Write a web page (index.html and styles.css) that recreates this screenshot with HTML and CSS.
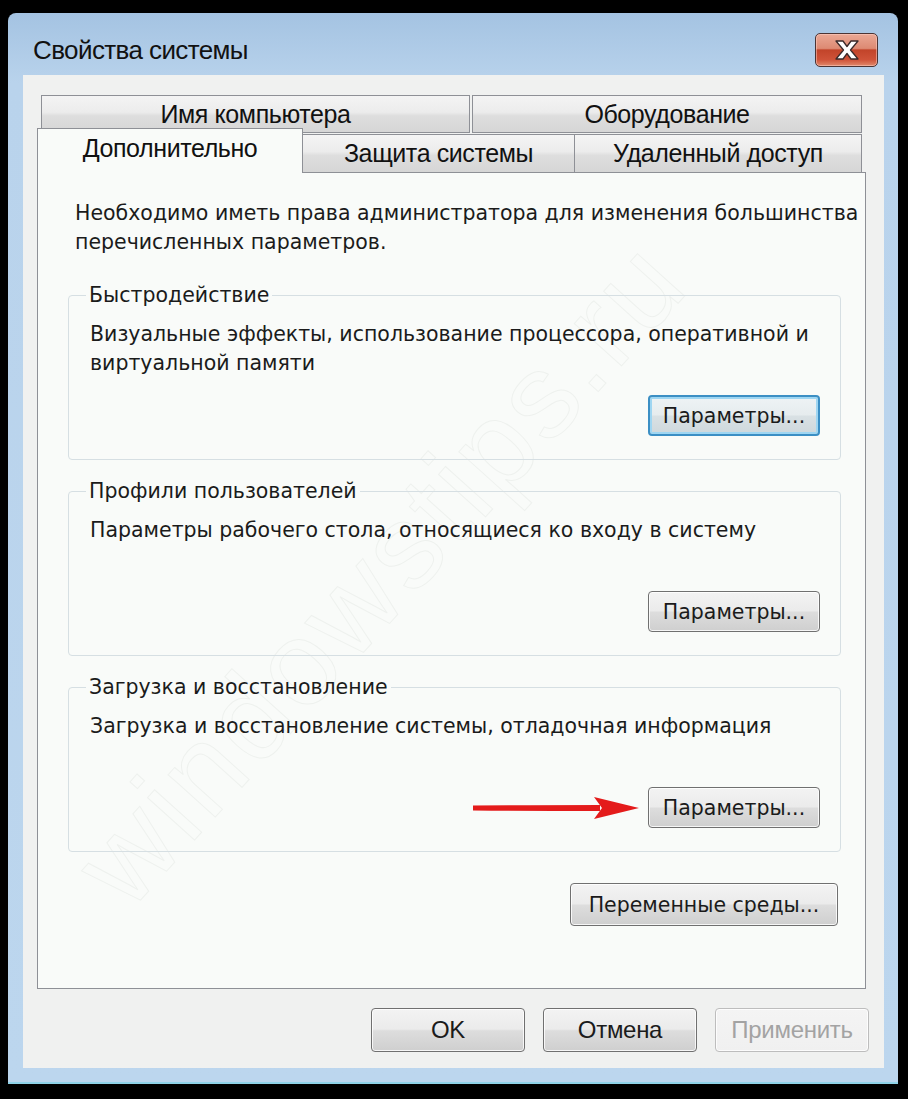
FILE: index.html
```html
<!DOCTYPE html>
<html lang="ru">
<head>
    <meta charset="UTF-8">
    <title>Свойства системы</title>
    <link rel="stylesheet" href="styles.css">
</head>
<body>
    <div class="window">
        <div class="titlebar">
            <div class="title">Свойства системы</div>
            <button class="close-btn" title="Закрыть">
                <svg width="30" height="22" viewBox="0 0 30 22">
                    <path d="M4 2 H11 L15 7.5 L19 2 H26 L18.5 11 L26 20 H19 L15 14.5 L11 20 H4 L11.5 11 Z" fill="#ffffff" stroke="#3a2a2a" stroke-width="1.3" stroke-linejoin="round"/>
                </svg>
            </button>
        </div>

        <div class="dialog">
            <div class="tabs">
                <div class="tab-row back">
                    <div class="tab wide">Имя компьютера</div>
                    <div class="tab">Оборудование</div>
                </div>
                <div class="tab-row front">
                    <div class="tab selected">Дополнительно</div>
                    <div class="tab t-protect">Защита системы</div>
                    <div class="tab t-remote">Удаленный доступ</div>
                </div>
            </div>

            <div class="panel">
                <div class="watermark">windowstips.ru</div>

                <p class="intro">Необходимо иметь права администратора для изменения большинства перечисленных параметров.</p>

                <fieldset class="group">
                    <legend>Быстродействие</legend>
                    <p class="group-text">Визуальные эффекты, использование процессора, оперативной и виртуальной памяти</p>
                    <div class="group-actions">
                        <button class="btn focused">Параметры...</button>
                    </div>
                </fieldset>

                <fieldset class="group">
                    <legend>Профили пользователей</legend>
                    <p class="group-text">Параметры рабочего стола, относящиеся ко входу в систему</p>
                    <div class="group-actions">
                        <button class="btn">Параметры...</button>
                    </div>
                </fieldset>

                <fieldset class="group">
                    <legend>Загрузка и восстановление</legend>
                    <p class="group-text">Загрузка и восстановление системы, отладочная информация</p>
                    <div class="group-actions">
                        <svg class="arrow" width="168" height="26" viewBox="0 0 168 26">
                            <path d="M1 10.5 Q60 10 128 10 L128 16 Q60 16 1 15.5 Z" fill="#e41b1b"/>
                            <path d="M122 2 L167 13 L122 24 L130 13 Z" fill="#e41b1b"/>
                        </svg>
                        <button class="btn">Параметры...</button>
                    </div>
                </fieldset>

                <div class="env-row">
                    <button class="btn env">Переменные среды...</button>
                </div>
            </div>

            <div class="dialog-buttons">
                <button class="btn big">OK</button>
                <button class="btn big">Отмена</button>
                <button class="btn big" disabled>Применить</button>
            </div>
        </div>
    </div>
</body>
</html>
```

FILE: styles.css
```css
* {
    margin: 0;
    padding: 0;
    box-sizing: border-box;
}

body {
    width: 908px;
    height: 1099px;
    background: #000;
    font-family: 'DejaVu Sans', Verdana, sans-serif;
    font-size: 20.5px;
    color: #1b1b1b;
    overflow: hidden;
}

/* рамка окна */
.window {
    margin: 13px 10px 0 8px;
    height: 1071px;
    border-radius: 8px 8px 0 0;
    background: linear-gradient(to bottom, #a4c3e2 0, #b9d3ec 70px, #bcd6ee 100%);
    padding: 0 14px 16px 15px;
    border-bottom: 2px solid #8fd3e8;
}

.titlebar {
    display: flex;
    align-items: center;
    justify-content: space-between;
    padding: 20px 6px 8px 10px;
    height: 62px;
}

.title {
    font-family: 'Liberation Sans', Arial, sans-serif;
    font-size: 26px;
    letter-spacing: -0.6px;
    color: #111;
}

.close-btn {
    width: 63px;
    height: 34px;
    border: 1px solid #4b3434;
    border-radius: 5px;
    background: linear-gradient(to bottom, #eaa895 0, #dd8a73 45%, #c2442a 50%, #cf5238 80%, #e08a6c 100%);
    display: flex;
    align-items: center;
    justify-content: center;
    box-shadow: inset 0 0 0 1px rgba(255, 210, 200, 0.5);
}

/* внутренняя часть диалога */
.dialog {
    background: #f0f1f0;
    height: 993px;
    padding: 20px 18px 16px 14px;
    display: flex;
    flex-direction: column;
}

.tab-row {
    display: flex;
}

.tab-row.back {
    margin: 0 4px;
}

.tab {
    height: 38px;
    flex: 1;
    display: flex;
    align-items: center;
    justify-content: center;
    border: 1px solid #8e9096;
    background: linear-gradient(to bottom, #f4f4f4 0, #ececec 45%, #dedede 55%, #d6d6d6 100%);
    font-family: 'Liberation Sans', Arial, sans-serif;
    font-size: 25px;
    letter-spacing: -0.4px;
    color: #111;
}

.tab-row.back .tab.wide {
    flex: 0 0 429px;
    margin-right: 2px;
}

.tab-row.front {
    margin-top: 1px;
    margin-right: 4px;
    align-items: flex-end;
}

.tab-row.front .tab {
    border-bottom: none;
}

.tab.t-protect {
    flex: 0 0 272px;
    border-left: none;
}

.tab.t-remote {
    flex: 0 0 287px;
    border-left: none;
}

.tab.selected {
    flex: 0 0 266px;
    height: 45px;
    margin-top: -6px;
    margin-bottom: -1px;
    position: relative;
    z-index: 2;
    background: #f9fbf9;
    padding-bottom: 5px;
}

/* содержимое вкладки */
.panel {
    position: relative;
    flex: 1;
    background: #f9fbf9;
    border: 1px solid #8e9096;
    padding: 26px 24px 0 37px;
    overflow: hidden;
}

.intro {
    position: relative;
    line-height: 29px;
    margin-right: -26px;
}

.group {
    position: relative;
    border: 1px solid #d6dfe3;
    border-radius: 4px;
    margin: 24px 0 0 -7px;
    padding: 10px 20px 23px 21px;
    min-width: 0;
}

.group + .group {
    margin-top: 17px;
}

.group legend {
    margin-left: -4px;
    padding: 0 3px;
    line-height: 29px;
}

.group-text {
    line-height: 29px;
    min-height: 58px;
    margin-right: -12px;
}

.group-actions {
    display: flex;
    justify-content: flex-end;
    align-items: center;
    margin-top: 17px;
}

.arrow {
    margin-right: 8px;
}

.btn {
    font-family: inherit;
    font-size: 20.5px;
    color: #1b1b1b;
    width: 172px;
    height: 41px;
    border: 1px solid #707070;
    border-radius: 4px;
    background: linear-gradient(to bottom, #f3f3f3 0, #ebebeb 48%, #dddddd 52%, #cfcfcf 100%);
    box-shadow: inset 0 0 0 1px rgba(255, 255, 255, 0.8);
}

.btn.focused {
    border: 2px solid #3c8fc4;
    background: linear-gradient(to bottom, #eef3f5 0, #e6ecee 48%, #d9e1e4 52%, #ced8dc 100%);
    box-shadow: inset 0 0 0 2px #9fd6f2;
}

.env-row {
    display: flex;
    justify-content: flex-end;
    margin: 31px 3px 0 0;
}

.btn.env {
    width: 268px;
    height: 43px;
}

.dialog-buttons {
    display: flex;
    justify-content: flex-end;
    gap: 18px;
    padding: 19px 0 0 0;
    margin-right: -3px;
}

.btn.big {
    width: 154px;
    height: 44px;
    font-family: 'Liberation Sans', Arial, sans-serif;
    font-size: 24px;
    letter-spacing: -0.3px;
}

.btn:disabled {
    color: #a3a3a3;
    border-color: #bdbdbd;
    background: linear-gradient(to bottom, #f4f4f4, #f0f0f0);
}

/* водяной знак */
.watermark {
    position: absolute;
    left: -80px;
    top: 330px;
    font-family: 'Liberation Sans', Arial, sans-serif;
    font-size: 120px;
    letter-spacing: 4px;
    color: transparent;
    -webkit-text-stroke: 1px rgba(120, 130, 120, 0.08);
    transform: rotate(-48deg);
    white-space: nowrap;
    pointer-events: none;
}
```
